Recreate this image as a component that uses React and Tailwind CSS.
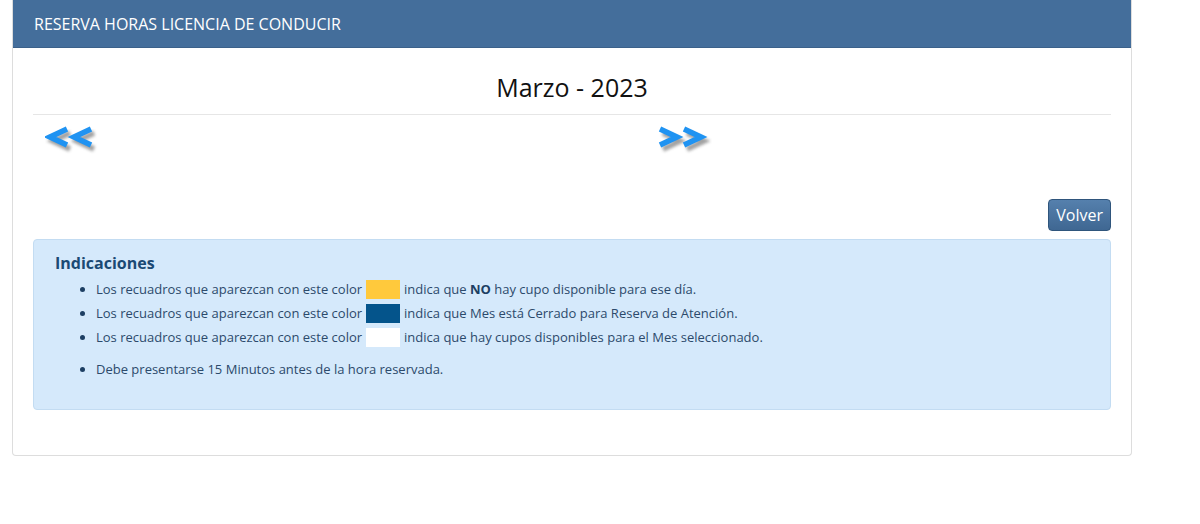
import React from 'react';

const font = { fontFamily: '"Open Sans", "Noto Sans", sans-serif' };

const Arrows = ({ dir }) => {
  const pts =
    dir === 'left'
      ? ['22,5 5,13 22,21', '46,5 29,13 46,21']
      : ['4,5 21,13 4,21', '28,5 45,13 28,21'];
  return (
    <svg width="56" height="32" viewBox="0 0 56 32">
      <defs>
        <filter id={`sh-${dir}`} x="-20%" y="-20%" width="150%" height="160%">
          <feGaussianBlur stdDeviation="1.4" />
        </filter>
      </defs>
      <g transform="translate(3,4)" filter={`url(#sh-${dir})`} opacity="0.55">
        {pts.map((p) => (
          <polyline key={p} points={p} fill="none" stroke="#555" strokeWidth="5.5" strokeLinejoin="miter" />
        ))}
      </g>
      {pts.map((p) => (
        <polyline key={p} points={p} fill="none" stroke="#1f93f2" strokeWidth="5.5" strokeLinejoin="miter" />
      ))}
    </svg>
  );
};

const items = [
  { swatch: 'bg-[#ffc93c]', text: <>indica que <b className="font-bold text-[#1d3f63]">NO</b> hay cupo disponible para ese día.</> },
  { swatch: 'bg-[#04548b]', text: <>indica que Mes está Cerrado para Reserva de Atención.</> },
  { swatch: 'bg-white', text: <>indica que hay cupos disponibles para el Mes seleccionado.</> },
];

export default function App() {
  return (
    <div className="min-h-[524px] bg-white pl-[12px] pr-[68px]" style={font}>
      <div className="w-[1120px] h-[456px] border border-t-0 border-[#dddddd] rounded-b-[4px] bg-white">
        <div className="h-[48px] bg-[#446e9b] border-b border-[#3b618a] flex items-center px-[21px]">
          <h3 className="text-white text-[16px] leading-none">RESERVA HORAS LICENCIA DE CONDUCIR</h3>
        </div>

        <div className="px-[20px]">
          <h2 className="text-center text-[25px] leading-[28px] text-[#111] pt-[25px] pb-[13px]">Marzo - 2023</h2>
          <hr className="border-0 border-t border-[#e6e6e6]" />

          <div className="flex h-[84px] pt-[9px]">
            <div className="w-[623px] pl-[12px]">
              <Arrows dir="left" />
            </div>
            <div>
              <Arrows dir="right" />
            </div>
          </div>

          <div className="flex justify-end">
            <button className="h-[32px] px-[7px] rounded-[4px] border border-[#2f557c] bg-gradient-to-b from-[#5580ad] to-[#3f6792] text-white text-[16px] leading-none">
              Volver
            </button>
          </div>

          <div className="mt-[8px] h-[171px] bg-[#d5e9fb] border border-[#c3dcf2] rounded-[4px] pl-[21px] pt-[11px] text-[#2c4a6b]">
            <h4 className="text-[16px] font-bold text-[#1b4a74] leading-[24px]">Indicaciones</h4>
            <ul className="list-disc pl-[41px] mt-[2px] text-[13px] marker:text-[#1d3f63]">
              {items.map((it, i) => (
                <li key={i} className="leading-[24px] h-[24px]">
                  <span className="inline-flex items-center">
                    Los recuadros que aparezcan con este color
                    <span className={`inline-block w-[34px] h-[19px] mx-[4px] ${it.swatch}`} />
                    <span>{it.text}</span>
                  </span>
                </li>
              ))}
              <li className="leading-[24px] mt-[8px]">Debe presentarse 15 Minutos antes de la hora reservada.</li>
            </ul>
          </div>
        </div>
      </div>
    </div>
  );
}
